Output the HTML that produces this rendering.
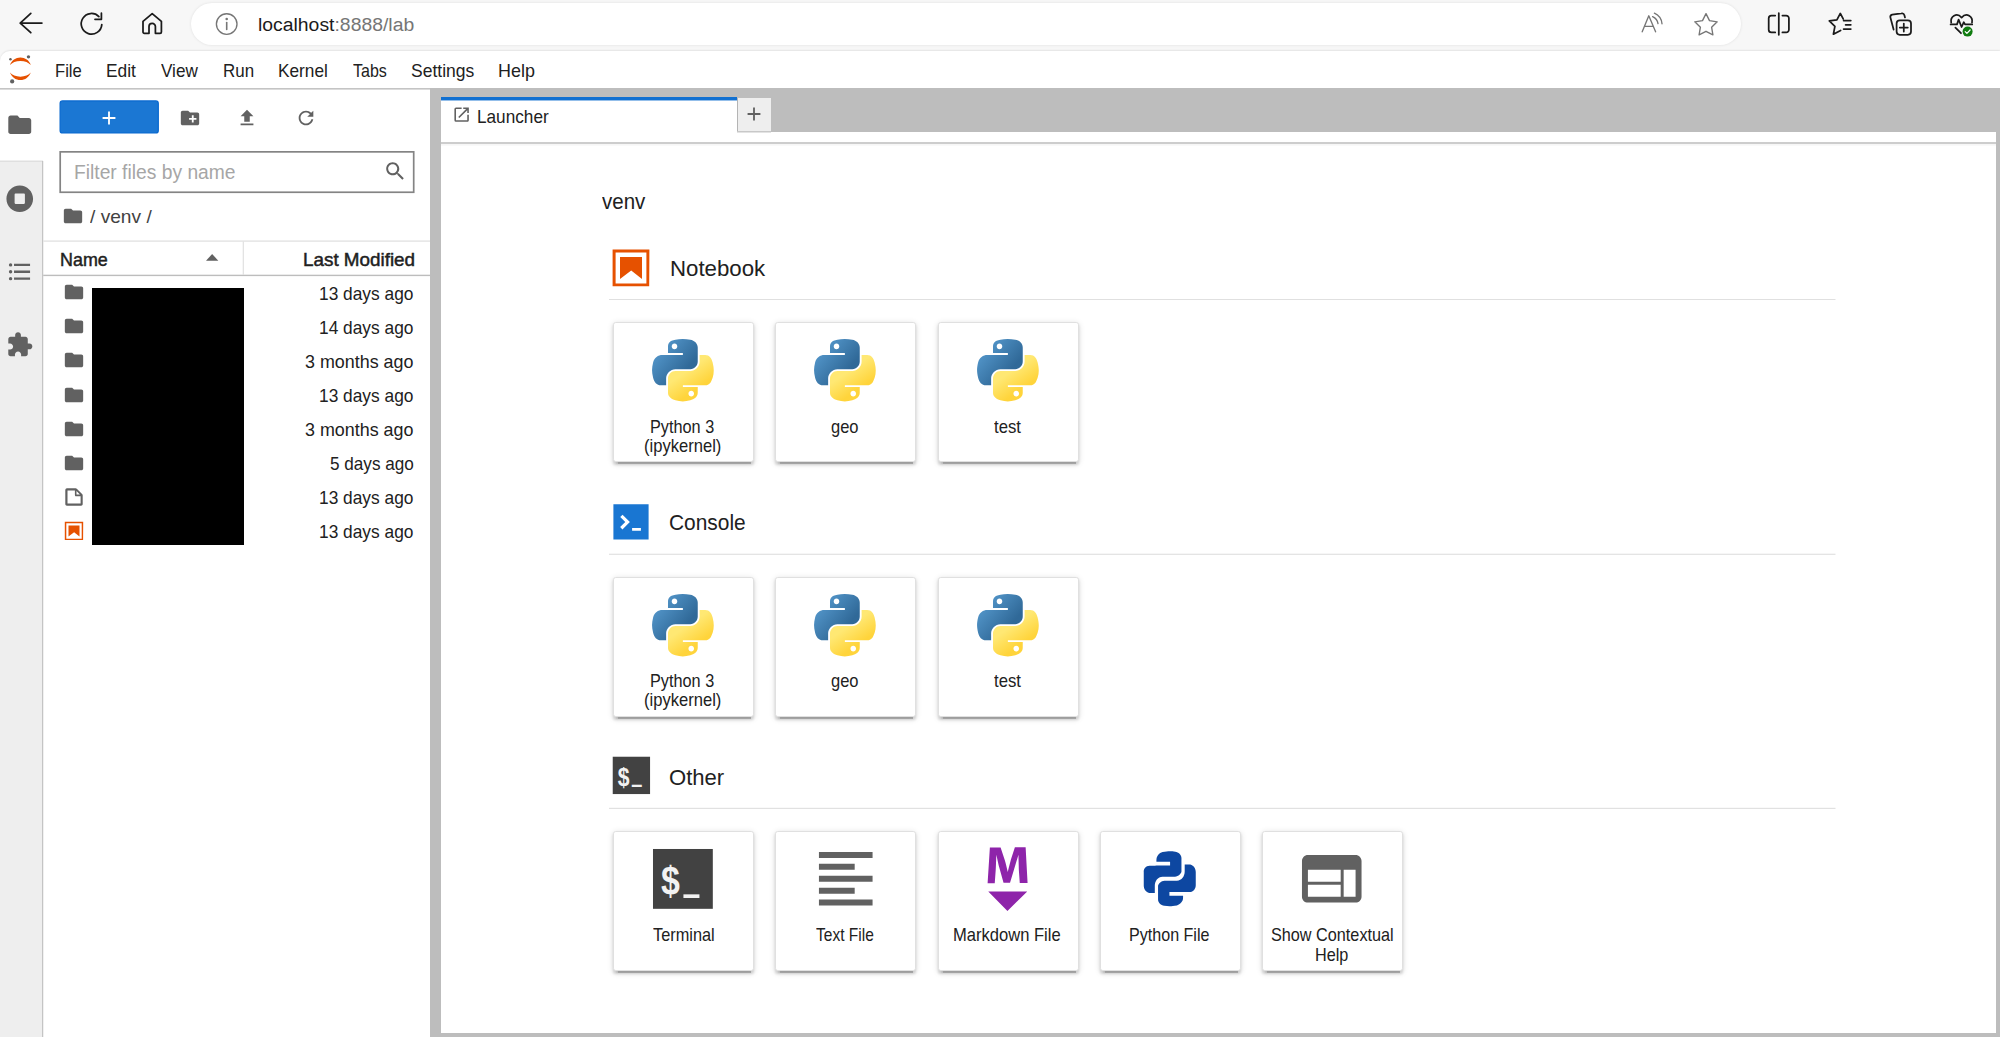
<!DOCTYPE html>
<html lang="en"><head><meta charset="utf-8"><title>JupyterLab</title>
<style>
*{box-sizing:border-box;margin:0;padding:0}
html,body{width:2000px;height:1037px;overflow:hidden;background:#f7f7f7;font-family:"Liberation Sans", sans-serif;}
.a{position:absolute}
.t{position:absolute;white-space:nowrap;line-height:1;transform-origin:0 0;display:block}
.i{position:absolute;display:block;overflow:visible}
#chrome{left:0;top:0;width:2000px;height:50px;background:#f7f7f7}
#omni{left:191px;top:3px;width:1550px;height:42px;border-radius:21px;background:#fff;box-shadow:0 0 3px rgba(0,0,0,.10)}
#page{left:0;top:51px;width:2000px;height:986px;background:#fff;border-top-left-radius:10px;box-shadow:0 -1px 1.6px rgba(0,0,0,.075)}

#side{left:0;top:161px;width:42px;height:876px;background:#eeeeee}





#redact{left:92px;top:288px;width:152px;height:257px;background:#000}
#split{left:430px;top:88px;width:11px;height:949px;background:#bdbdbd}
#dock{left:441px;top:88px;width:1559px;height:44px;background:#bdbdbd}
#rightb{left:1996px;top:131px;width:4px;height:906px;background:#bdbdbd}
#botb{left:430px;top:1033px;width:1570px;height:4px;background:#bdbdbd}
#tab{left:441px;top:97px;width:296px;height:36px;background:#fff}
#addtab{left:737px;top:98px;width:34px;height:33px;background:#eeeeee}


.card{position:absolute;width:141px;height:140.1px;background:#fff;border:1px solid #e0e0e0;border-radius:2.75px;
 box-shadow:0 4.8px 1.6px -2.75px rgba(0,0,0,.22),0 2.75px 2.75px 0 rgba(0,0,0,.14),0 1.4px 6.9px 0 rgba(0,0,0,.12)}
</style></head><body>
<header id="browser-toolbar" aria-label="Browser toolbar">
<div id="chrome" class="a"><div id="omni" class="a"></div></div>

<svg class="i" style="left:0;top:0" width="2000" height="50" viewBox="0 0 2000 50" fill="none" stroke-linecap="round" stroke-linejoin="round">
 <g stroke="#1b1b1b" stroke-width="1.75">
  <path d="M41.9 23.1H20.4M30.8 13.4L20.2 23.1L30.8 32.7"/>
  <path d="M101.8 24.6A10.3 10.3 0 1 1 98.9 16.6"/><path d="M101.4 13.2V19.3H95"/>
  <path d="M152.2 13.7L143 21.4V32a1.3 1.3 0 0 0 1.3 1.3H149V26.6a3.2 3.2 0 0 1 6.4 0V33.3H160.1a1.3 1.3 0 0 0 1.3 -1.3V21.4Z"/>
  <path d="M1775.2 15.6H1771.4a2.7 2.7 0 0 0 -2.7 2.7V29.7a2.7 2.7 0 0 0 2.7 2.7H1775.2M1782.4 15.6H1786.2a2.7 2.7 0 0 1 2.7 2.7V29.7a2.7 2.7 0 0 1 -2.7 2.7H1782.4M1778.8 13.2V34.8"/>
  <path d="M1840.6 30.4L1833.4 34.2L1834.9 26.3L1829.3 20.9L1836.9 19.8L1840.3 13.4L1843.2 18.9M1843.6 20.6H1850.8M1845.6 24.8H1850.8M1843.6 29H1850.8"/>
  <path d="M1893.6 29.6L1890.4 17.6a2.5 2.5 0 0 1 1.8 -3L1901.4 13.4a2.5 2.5 0 0 1 3 1.8L1905 17.4"/>
  <rect x="1896.6" y="20.4" width="14.4" height="14.4" rx="3.2"/><path d="M1903.8 23.6V31.6M1899.8 27.6H1907.8"/>
  <path d="M1951.2 22.6C1950 17 1956.5 11.8 1961.6 17.6C1966.7 11.8 1973.2 17 1972 22.6"/>
  <path d="M1950.6 24.4H1957L1958.6 19.6L1961.6 27L1963.8 22.2L1965 24.4H1972.2"/><path d="M1955.4 27.6L1961 33.2"/>
 </g>
 <g stroke="#767676" stroke-width="1.35">
  <circle cx="226.7" cy="24" r="10.3"/><path d="M226.7 22.6V29.4" stroke-width="1.6"/><circle cx="226.7" cy="19" r="0.6" fill="#767676"/>
  <path d="M1642.2 31.8L1648.8 15.8L1655.6 31.8M1644.6 26.4H1653.2M1652.6 16.6C1655.6 18 1657.6 20.6 1658 23.6M1654.4 13.2C1658.8 15.2 1661.6 19 1662 23.8"/>
  <path d="M1706 13.6L1709.5 20.6L1717.2 21.8L1711.6 27.2L1712.9 34.9L1706 31.3L1699.1 34.9L1700.4 27.2L1694.8 21.8L1702.5 20.6Z"/>
 </g>
 <circle cx="1967.6" cy="31.6" r="5" fill="#107c10"/><path d="M1965.2 31.7L1966.9 33.4L1970.1 30" stroke="#fff" stroke-width="1.2"/>
</svg>
<span class="t" style="left:258.19px;top:15.00px;font-size:19.2px;color:#1b1b1b;transform:scaleX(1.0097);">localhost<span style="color:#767676">:8888/lab</span></span>
</header>
<div id="page" class="a"></div>
<nav id="menubar" aria-label="Main menu">
<svg class="i" style="left:0;top:0" width="2000" height="1037" viewBox="0 0 2000 1037" aria-hidden="true"><rect x="0" y="88" width="431" height="1.6" fill="#c4c4c4"/></svg>
<svg class="i" style="left:9.20px;top:55.20px" width="22.2" height="29" viewBox="0 0 39 51" ><g transform="translate(-1638 -2281)"><g fill="#E65100"><path transform="translate(1639.74 2311.98)" d="M 18.2646 7.13411C 10.4145 7.13411 3.55872 4.2576 0 0C 1.32539 3.8204 3.79556 7.13081 7.0686 9.47303C 10.3417 11.8152 14.2557 13.0734 18.269 13.0734C 22.2823 13.0734 26.1963 11.8152 29.4694 9.47303C 32.7424 7.13081 35.2126 3.8204 36.538 0C 32.9705 4.2576 26.1148 7.13411 18.2646 7.13411Z"/><path transform="translate(1639.73 2285.48)" d="M 18.2733 5.93931C 26.1235 5.93931 32.9793 8.81583 36.538 13.0734C 35.2126 9.25303 32.7424 5.94262 29.4694 3.6004C 26.1963 1.25818 22.2823 0 18.269 0C 14.2557 0 10.3417 1.25818 7.0686 3.6004C 3.79556 5.94262 1.32539 9.25303 0 13.0734C 3.56745 8.82463 10.4232 5.93931 18.2733 5.93931Z"/></g><g fill="#616161"><circle cx="1672.25" cy="2284.27" r="2.95"/><circle cx="1643.52" cy="2327.54" r="3.72"/><circle cx="1640.54" cy="2288.26" r="2.2"/></g></g></svg>
<span class="t" style="left:55.06px;top:63.00px;font-size:17.7px;color:#212121;transform:scaleX(0.9399);">File</span>
<span class="t" style="left:106.02px;top:63.00px;font-size:17.7px;color:#212121;transform:scaleX(0.9809);">Edit</span>
<span class="t" style="left:161.00px;top:63.00px;font-size:17.7px;color:#212121;transform:scaleX(0.9675);">View</span>
<span class="t" style="left:222.74px;top:63.00px;font-size:17.7px;color:#212121;transform:scaleX(0.9572);">Run</span>
<span class="t" style="left:278.02px;top:63.00px;font-size:17.7px;color:#212121;transform:scaleX(0.9756);">Kernel</span>
<span class="t" style="left:352.50px;top:63.00px;font-size:17.7px;color:#212121;transform:scaleX(0.9063);">Tabs</span>
<span class="t" style="left:411.00px;top:63.00px;font-size:17.7px;color:#212121;transform:scaleX(0.9896);">Settings</span>
<span class="t" style="left:498.49px;top:63.00px;font-size:17.7px;color:#212121;transform:scaleX(1.0129);">Help</span>
</nav>
<aside id="sidebar" aria-label="Sidebar">
<div id="side" class="a"></div>
<svg class="i" style="left:0;top:0" width="2000" height="1037" viewBox="0 0 2000 1037" aria-hidden="true"><rect x="0" y="160.6" width="43" height="1" fill="#d6d6d6"/><rect x="42.05" y="161" width="1.2" height="876" fill="#c2c2c2"/></svg>
<svg class="i" style="left:6.25px;top:110.85px" width="27.5" height="27.5" viewBox="0 0 24 24" ><path d="M10 4H4c-1.1 0-1.99.9-1.99 2L2 18c0 1.1.9 2 2 2h16c1.1 0 2-.9 2-2V8c0-1.1-.9-2-2-2h-8l-2-2z" fill="#616161"/></svg>
<svg class="i" style="left:6.25px;top:185.25px" width="27.5" height="27.5" viewBox="0 0 512 512" ><path d="M256 8C119 8 8 119 8 256s111 248 248 248 248-111 248-248S393 8 256 8zm96 328c0 8.8-7.2 16-16 16H176c-8.8 0-16-7.2-16-16V176c0-8.8 7.2-16 16-16h160c8.8 0 16 7.2 16 16v160z" fill="#616161"/></svg>
<svg class="i" style="left:6.20px;top:257.95px" width="27.5" height="27.5" viewBox="0 0 24 24" ><path d="M7,5H21V7H7V5M7,13V11H21V13H7M4,4.5A1.5,1.5 0 0,1 5.5,6A1.5,1.5 0 0,1 4,7.5A1.5,1.5 0 0,1 2.5,6A1.5,1.5 0 0,1 4,4.5M4,10.5A1.5,1.5 0 0,1 5.5,12A1.5,1.5 0 0,1 4,13.5A1.5,1.5 0 0,1 2.5,12A1.5,1.5 0 0,1 4,10.5M7,19V17H21V19H7M4,16.5A1.5,1.5 0 0,1 5.5,18A1.5,1.5 0 0,1 4,19.5A1.5,1.5 0 0,1 2.5,18A1.5,1.5 0 0,1 4,16.5Z" fill="#616161"/></svg>
<svg class="i" style="left:5.90px;top:330.55px" width="27.5" height="27.5" viewBox="0 0 24 24" ><path d="M20.5 11H19V7c0-1.1-.9-2-2-2h-4V3.5C13 2.12 11.88 1 10.5 1S8 2.12 8 3.5V5H4c-1.1 0-1.99.9-1.99 2v3.8H3.5c1.49 0 2.7 1.21 2.7 2.7s-1.21 2.7-2.7 2.7H2V20c0 1.1.9 2 2 2h3.8v-1.5c0-1.49 1.21-2.7 2.7-2.7 1.49 0 2.7 1.21 2.7 2.7V22H17c1.1 0 2-.9 2-2v-4h1.5c1.38 0 2.5-1.12 2.5-2.5S21.88 11 20.5 11z" fill="#616161"/></svg>
</aside>
<section id="filebrowser" aria-label="File browser">
<svg class="i" style="left:0;top:0" width="2000" height="1037" viewBox="0 0 2000 1037" aria-hidden="true"><rect x="60.1" y="100.9" width="98.2" height="32.1" rx="2.6" fill="#1b77d3" stroke="#0868cf" stroke-width="1.2"/><rect x="60.2" y="151.85" width="353.5" height="40.4" fill="#fff" stroke="#848484" stroke-width="1.7"/><rect x="43.2" y="240.4" width="387" height="1.4" fill="#e3e3e3"/><rect x="43.2" y="274.7" width="387" height="1.4" fill="#bdbdbd"/><rect x="242.7" y="241.5" width="1.2" height="33.5" fill="#e0e0e0"/></svg>
<div id="redact" class="a"></div>
<svg class="i" style="left:98.20px;top:106.90px" width="22" height="22" viewBox="0 0 24 24" ><path d="M19 13h-6v6h-2v-6H5v-2h6V5h2v6h6v2z" fill="#fff"/></svg>
<svg class="i" style="left:178.60px;top:106.90px" width="22" height="22" viewBox="0 0 24 24" ><path d="M20 6h-8l-2-2H4c-1.11 0-1.99.89-1.99 2L2 18c0 1.11.89 2 2 2h16c1.11 0 2-.89 2-2V8c0-1.11-.89-2-2-2zm-1 8h-3v3h-2v-3h-3v-2h3V9h2v3h3v2z" fill="#616161"/></svg>
<svg class="i" style="left:236.20px;top:107.05px" width="22" height="22" viewBox="0 0 24 24" ><path d="M9 16h6v-6h4l-7-7-7 7h4zm-4 2h14v2H5z" fill="#616161"/></svg>
<svg class="i" style="left:294.85px;top:106.85px" width="22" height="22" viewBox="0 0 18 18" ><path d="M9 13.5c-2.49 0-4.5-2.01-4.5-4.5S6.51 4.5 9 4.5c1.24 0 2.36.52 3.17 1.33L10 8h5V3l-1.76 1.76C12.15 3.68 10.66 3 9 3 5.69 3 3.01 5.69 3.01 9S5.69 15 9 15c2.97 0 5.43-2.16 5.9-5h-1.52c-.46 2-2.24 3.5-4.38 3.5z" fill="#616161"/></svg>
<svg class="i" style="left:383.80px;top:160.10px" width="22" height="22" viewBox="0 0 18 18" ><path d="M12.1,10.9h-0.7l-0.2-0.2c0.8-0.9,1.3-2.2,1.3-3.5c0-3-2.4-5.4-5.4-5.4S1.8,4.2,1.8,7.1s2.4,5.4,5.4,5.4 c1.3,0,2.5-0.5,3.5-1.3l0.2,0.2v0.7l4.1,4.1l1.2-1.2L12.1,10.9z M7.1,10.9c-2.1,0-3.7-1.7-3.7-3.7s1.7-3.7,3.7-3.7s3.7,1.7,3.7,3.7 S9.2,10.9,7.1,10.9z" fill="#616161"/></svg>
<svg class="i" style="left:62.17px;top:205.20px" width="22" height="22" viewBox="0 0 24 24" ><path d="M10 4H4c-1.1 0-1.99.9-1.99 2L2 18c0 1.1.9 2 2 2h16c1.1 0 2-.9 2-2V8c0-1.1-.9-2-2-2h-8l-2-2z" fill="#616161"/></svg>
<svg class="i" style="left:204px;top:252px" width="16" height="10" viewBox="204 252 16 10"><path d="M206 260.8L212.15 254L218.3 260.8Z" fill="#616161"/></svg>
<svg class="i" style="left:62.97px;top:281.10px" width="22" height="22" viewBox="0 0 24 24" ><path d="M10 4H4c-1.1 0-1.99.9-1.99 2L2 18c0 1.1.9 2 2 2h16c1.1 0 2-.9 2-2V8c0-1.1-.9-2-2-2h-8l-2-2z" fill="#616161"/></svg>
<svg class="i" style="left:62.97px;top:315.25px" width="22" height="22" viewBox="0 0 24 24" ><path d="M10 4H4c-1.1 0-1.99.9-1.99 2L2 18c0 1.1.9 2 2 2h16c1.1 0 2-.9 2-2V8c0-1.1-.9-2-2-2h-8l-2-2z" fill="#616161"/></svg>
<svg class="i" style="left:62.97px;top:349.40px" width="22" height="22" viewBox="0 0 24 24" ><path d="M10 4H4c-1.1 0-1.99.9-1.99 2L2 18c0 1.1.9 2 2 2h16c1.1 0 2-.9 2-2V8c0-1.1-.9-2-2-2h-8l-2-2z" fill="#616161"/></svg>
<svg class="i" style="left:62.97px;top:383.55px" width="22" height="22" viewBox="0 0 24 24" ><path d="M10 4H4c-1.1 0-1.99.9-1.99 2L2 18c0 1.1.9 2 2 2h16c1.1 0 2-.9 2-2V8c0-1.1-.9-2-2-2h-8l-2-2z" fill="#616161"/></svg>
<svg class="i" style="left:62.97px;top:417.70px" width="22" height="22" viewBox="0 0 24 24" ><path d="M10 4H4c-1.1 0-1.99.9-1.99 2L2 18c0 1.1.9 2 2 2h16c1.1 0 2-.9 2-2V8c0-1.1-.9-2-2-2h-8l-2-2z" fill="#616161"/></svg>
<svg class="i" style="left:62.97px;top:451.85px" width="22" height="22" viewBox="0 0 24 24" ><path d="M10 4H4c-1.1 0-1.99.9-1.99 2L2 18c0 1.1.9 2 2 2h16c1.1 0 2-.9 2-2V8c0-1.1-.9-2-2-2h-8l-2-2z" fill="#616161"/></svg>
<svg class="i" style="left:62.80px;top:485.70px" width="22" height="22" viewBox="0 0 22 22" ><path d="M19.3 8.2l-5.5-5.5c-.3-.3-.7-.5-1.2-.5H3.9c-.8.1-1.6.9-1.6 1.8v14.1c0 .9.7 1.6 1.6 1.6h14.2c.9 0 1.6-.7 1.6-1.6V9.4c.1-.5-.1-.9-.4-1.2zm-5.8-3.3l3.4 3.6h-3.4V4.9zm3.9 12.7H4.7c-.1 0-.2 0-.2-.2V4.7c0-.2.1-.3.2-.3h7.2v4.4s0 .8.3 1.1c.3.3 1.1.3 1.1.3h4.3v7.2s-.1.2-.2.2z" fill="#616161"/></svg>
<svg class="i" style="left:62.80px;top:519.60px" width="22" height="22" viewBox="0 0 22 22" ><g fill="#E65100"><path d="M18.7 3.3v15.4H3.3V3.3h15.4m1.5-1.5H1.8v18.3h18.3l.1-18.3z"/><path d="M16.5 16.5l-5.4-4.3-5.6 4.3v-11h11z"/></g></svg>
<span class="t" style="left:74.02px;top:163.00px;font-size:19.7px;color:#a6a6a6;transform:scaleX(0.9777);">Filter files by name</span>
<span class="t" style="left:90.00px;top:209.00px;font-size:17.7px;color:#424242;transform:scaleX(1.0822);">/ venv /</span>
<span class="t" style="left:59.79px;top:252.00px;font-size:17.7px;color:#212121;transform:scaleX(1.0120);-webkit-text-stroke:0.45px #212121;">Name</span>
<span class="t" style="left:302.83px;top:252.00px;font-size:17.7px;color:#212121;transform:scaleX(1.0652);-webkit-text-stroke:0.45px #212121;">Last Modified</span>
<span class="t" style="left:319.42px;top:286.00px;font-size:17.7px;color:#212121;transform:scaleX(0.9797);">13 days ago</span>
<span class="t" style="left:319.42px;top:320.00px;font-size:17.7px;color:#212121;transform:scaleX(0.9797);">14 days ago</span>
<span class="t" style="left:305.40px;top:354.00px;font-size:17.7px;color:#212121;transform:scaleX(1.0117);">3 months ago</span>
<span class="t" style="left:319.42px;top:388.00px;font-size:17.7px;color:#212121;transform:scaleX(0.9797);">13 days ago</span>
<span class="t" style="left:305.40px;top:422.00px;font-size:17.7px;color:#212121;transform:scaleX(1.0117);">3 months ago</span>
<span class="t" style="left:330.00px;top:456.00px;font-size:17.7px;color:#212121;transform:scaleX(0.9689);">5 days ago</span>
<span class="t" style="left:319.42px;top:490.00px;font-size:17.7px;color:#212121;transform:scaleX(0.9797);">13 days ago</span>
<span class="t" style="left:319.42px;top:524.00px;font-size:17.7px;color:#212121;transform:scaleX(0.9797);">13 days ago</span>
</section>
<main id="launcher" aria-label="Launcher">
<div id="split" class="a"></div><div id="dock" class="a"></div><div id="rightb" class="a"></div><div id="botb" class="a"></div>
<div id="tab" class="a"></div><div id="addtab" class="a"></div>
<svg class="i" style="left:0;top:0" width="2000" height="1037" viewBox="0 0 2000 1037" aria-hidden="true"><rect x="441" y="97" width="296" height="3.45" fill="#1170d1"/><rect x="737" y="98" width="1" height="33.5" fill="#b4b4b4"/><rect x="737" y="131" width="34" height="1.5" fill="#c8c8c8"/><rect x="441" y="142" width="1555" height="2.1" fill="#cdcdcd"/><rect x="441" y="144.1" width="1555" height="1.5" fill="#f6f6f6"/><rect x="609" y="299" width="1226.5" height="1" fill="#e0e0e0"/><rect x="609" y="553.7" width="1226.5" height="1.15" fill="#e0e0e0"/><rect x="609" y="807.8" width="1226.5" height="1.15" fill="#e0e0e0"/></svg>
<div class="card" style="left:613.00px;top:322.0px"></div>
<div class="card" style="left:775.25px;top:322.0px"></div>
<div class="card" style="left:937.50px;top:322.0px"></div>
<div class="card" style="left:613.00px;top:576.9px"></div>
<div class="card" style="left:775.25px;top:576.9px"></div>
<div class="card" style="left:937.50px;top:576.9px"></div>
<div class="card" style="left:613.00px;top:830.8px"></div>
<div class="card" style="left:775.25px;top:830.8px"></div>
<div class="card" style="left:937.50px;top:830.8px"></div>
<div class="card" style="left:1099.75px;top:830.8px"></div>
<div class="card" style="left:1262.00px;top:830.8px"></div>
<svg class="i" style="left:452.10px;top:105.10px" width="19.25" height="19.25" viewBox="0 0 24 24" ><path d="M19 19H5V5h7V3H5a2 2 0 00-2 2v14a2 2 0 002 2h14c1.1 0 2-.9 2-2v-7h-2v7zM14 3v2h3.59l-9.83 9.83 1.41 1.41L19 6.41V10h2V3h-7z" fill="#616161"/></svg>
<svg class="i" style="left:743.20px;top:103.20px" width="22" height="22" viewBox="0 0 24 24" ><path d="M19 13h-6v6h-2v-6H5v-2h6V5h2v6h6v2z" fill="#616161"/></svg>
<svg class="i" style="left:608.70px;top:245.80px" width="44" height="44" viewBox="0 0 22 22" ><g fill="#E65100"><path d="M18.7 3.3v15.4H3.3V3.3h15.4m1.5-1.5H1.8v18.3h18.3l.1-18.3z"/><path d="M16.5 16.5l-5.4-4.3-5.6 4.3v-11h11z"/></g></svg>
<svg class="i" style="left:608.90px;top:499.85px" width="44" height="44" viewBox="0 0 200 200" ><path d="M20 19.8h160v159.9H20z" fill="#1976d2"/><path d="M105 127.3h40v12.8h-40zM51.1 77L74 99.9l-23.3 23.3 10.5 10.5 23.3-23.3L95 99.9 84.5 89.4 61.6 66.5z" fill="#fff"/></svg>
<svg class="i" style="left:608.55px;top:753.25px" width="44.8" height="44.8" viewBox="0 0 24 24" ><rect x="2" y="2" width="20" height="20" fill="#424242"/><text transform="translate(4.667 17.527) scale(0.11333 0.13902)" font-family="Liberation Sans, sans-serif" font-size="100" font-weight="bold" fill="#f2f2f2">$</text><text transform="translate(12.293 14.500) scale(0.09259 0.31750)" font-family="Liberation Sans, sans-serif" font-size="100" font-weight="bold" fill="#f2f2f2">_</text></svg>
<svg class="i" style="left:652.15px;top:338.70px" width="61.8" height="62.5" viewBox="-0.1 -0.1 111.3 112.6" preserveAspectRatio="none"><defs><linearGradient id="pb1" gradientUnits="userSpaceOnUse" x1="5" y1="5" x2="62" y2="54"><stop offset="0" stop-color="#5A9FD4"/><stop offset="1" stop-color="#306998"/></linearGradient><linearGradient id="py1" gradientUnits="userSpaceOnUse" x1="83" y1="88" x2="62" y2="58"><stop offset="0" stop-color="#FFD43B"/><stop offset="1" stop-color="#FFE873"/></linearGradient></defs><path d="M 54.918785,9.1927421e-4 C 50.335132,0.02221727 45.957846,0.41313697 42.106285,1.0946693 30.760069,3.0991731 28.700036,7.2947714 28.700035,15.032169 v 10.21875 h 26.8125 v 3.40625 h -26.8125 -10.0625 c -7.792459,0 -14.6157588,4.683717 -16.7499998,13.59375 -2.46181998,10.212966 -2.57101508,16.586023 0,27.25 1.9059283,7.937852 6.4575432,13.593748 14.2499998,13.59375 h 9.21875 v -12.25 c 0,-8.849902 7.657144,-16.656248 16.75,-16.65625 h 26.78125 c 7.454951,0 13.406253,-6.138164 13.40625,-13.625 v -25.53125 c 0,-7.2663386 -6.12998,-12.7247771 -13.40625,-13.9374997 C 64.281548,0.32794397 59.502438,-0.02037903 54.918785,9.1927421e-4 Z m -14.5,8.21875012579 c 2.769547,0 5.03125,2.2986456 5.03125,5.1249996 -2e-6,2.816336 -2.261703,5.09375 -5.03125,5.09375 -2.779476,-1e-6 -5.03125,-2.277415 -5.03125,-5.09375 -10e-7,-2.826353 2.251774,-5.1249996 5.03125,-5.1249996 z" fill="url(#pb1)"/><path d="m 85.637535,28.657169 v 11.90625 c 0,9.230755 -7.825895,16.999999 -16.75,17 h -26.78125 c -7.335833,0 -13.406249,6.278483 -13.40625,13.625 v 25.531247 c 0,7.266344 6.318588,11.540324 13.40625,13.625004 8.487331,2.49561 16.626237,2.94663 26.78125,0 6.750155,-1.95439 13.406253,-5.88761 13.40625,-13.625004 V 86.500919 h -26.78125 v -3.40625 h 26.78125 13.406254 c 7.792461,0 10.696251,-5.435408 13.406241,-13.59375 2.79933,-8.398886 2.68022,-16.475776 0,-27.25 -1.92578,-7.757441 -5.60387,-13.59375 -13.406241,-13.59375 z m -15.0625,64.65625 c 2.779478,3e-6 5.03125,2.277417 5.03125,5.093747 -2e-6,2.826354 -2.251775,5.125004 -5.03125,5.125004 -2.76955,0 -5.03125,-2.29865 -5.03125,-5.125004 2e-6,-2.81633 2.261697,-5.093747 5.03125,-5.093747 z" fill="url(#py1)"/></svg>
<svg class="i" style="left:814.40px;top:338.70px" width="61.8" height="62.5" viewBox="-0.1 -0.1 111.3 112.6" preserveAspectRatio="none"><defs><linearGradient id="pb2" gradientUnits="userSpaceOnUse" x1="5" y1="5" x2="62" y2="54"><stop offset="0" stop-color="#5A9FD4"/><stop offset="1" stop-color="#306998"/></linearGradient><linearGradient id="py2" gradientUnits="userSpaceOnUse" x1="83" y1="88" x2="62" y2="58"><stop offset="0" stop-color="#FFD43B"/><stop offset="1" stop-color="#FFE873"/></linearGradient></defs><path d="M 54.918785,9.1927421e-4 C 50.335132,0.02221727 45.957846,0.41313697 42.106285,1.0946693 30.760069,3.0991731 28.700036,7.2947714 28.700035,15.032169 v 10.21875 h 26.8125 v 3.40625 h -26.8125 -10.0625 c -7.792459,0 -14.6157588,4.683717 -16.7499998,13.59375 -2.46181998,10.212966 -2.57101508,16.586023 0,27.25 1.9059283,7.937852 6.4575432,13.593748 14.2499998,13.59375 h 9.21875 v -12.25 c 0,-8.849902 7.657144,-16.656248 16.75,-16.65625 h 26.78125 c 7.454951,0 13.406253,-6.138164 13.40625,-13.625 v -25.53125 c 0,-7.2663386 -6.12998,-12.7247771 -13.40625,-13.9374997 C 64.281548,0.32794397 59.502438,-0.02037903 54.918785,9.1927421e-4 Z m -14.5,8.21875012579 c 2.769547,0 5.03125,2.2986456 5.03125,5.1249996 -2e-6,2.816336 -2.261703,5.09375 -5.03125,5.09375 -2.779476,-1e-6 -5.03125,-2.277415 -5.03125,-5.09375 -10e-7,-2.826353 2.251774,-5.1249996 5.03125,-5.1249996 z" fill="url(#pb2)"/><path d="m 85.637535,28.657169 v 11.90625 c 0,9.230755 -7.825895,16.999999 -16.75,17 h -26.78125 c -7.335833,0 -13.406249,6.278483 -13.40625,13.625 v 25.531247 c 0,7.266344 6.318588,11.540324 13.40625,13.625004 8.487331,2.49561 16.626237,2.94663 26.78125,0 6.750155,-1.95439 13.406253,-5.88761 13.40625,-13.625004 V 86.500919 h -26.78125 v -3.40625 h 26.78125 13.406254 c 7.792461,0 10.696251,-5.435408 13.406241,-13.59375 2.79933,-8.398886 2.68022,-16.475776 0,-27.25 -1.92578,-7.757441 -5.60387,-13.59375 -13.406241,-13.59375 z m -15.0625,64.65625 c 2.779478,3e-6 5.03125,2.277417 5.03125,5.093747 -2e-6,2.826354 -2.251775,5.125004 -5.03125,5.125004 -2.76955,0 -5.03125,-2.29865 -5.03125,-5.125004 2e-6,-2.81633 2.261697,-5.093747 5.03125,-5.093747 z" fill="url(#py2)"/></svg>
<svg class="i" style="left:976.65px;top:338.70px" width="61.8" height="62.5" viewBox="-0.1 -0.1 111.3 112.6" preserveAspectRatio="none"><defs><linearGradient id="pb3" gradientUnits="userSpaceOnUse" x1="5" y1="5" x2="62" y2="54"><stop offset="0" stop-color="#5A9FD4"/><stop offset="1" stop-color="#306998"/></linearGradient><linearGradient id="py3" gradientUnits="userSpaceOnUse" x1="83" y1="88" x2="62" y2="58"><stop offset="0" stop-color="#FFD43B"/><stop offset="1" stop-color="#FFE873"/></linearGradient></defs><path d="M 54.918785,9.1927421e-4 C 50.335132,0.02221727 45.957846,0.41313697 42.106285,1.0946693 30.760069,3.0991731 28.700036,7.2947714 28.700035,15.032169 v 10.21875 h 26.8125 v 3.40625 h -26.8125 -10.0625 c -7.792459,0 -14.6157588,4.683717 -16.7499998,13.59375 -2.46181998,10.212966 -2.57101508,16.586023 0,27.25 1.9059283,7.937852 6.4575432,13.593748 14.2499998,13.59375 h 9.21875 v -12.25 c 0,-8.849902 7.657144,-16.656248 16.75,-16.65625 h 26.78125 c 7.454951,0 13.406253,-6.138164 13.40625,-13.625 v -25.53125 c 0,-7.2663386 -6.12998,-12.7247771 -13.40625,-13.9374997 C 64.281548,0.32794397 59.502438,-0.02037903 54.918785,9.1927421e-4 Z m -14.5,8.21875012579 c 2.769547,0 5.03125,2.2986456 5.03125,5.1249996 -2e-6,2.816336 -2.261703,5.09375 -5.03125,5.09375 -2.779476,-1e-6 -5.03125,-2.277415 -5.03125,-5.09375 -10e-7,-2.826353 2.251774,-5.1249996 5.03125,-5.1249996 z" fill="url(#pb3)"/><path d="m 85.637535,28.657169 v 11.90625 c 0,9.230755 -7.825895,16.999999 -16.75,17 h -26.78125 c -7.335833,0 -13.406249,6.278483 -13.40625,13.625 v 25.531247 c 0,7.266344 6.318588,11.540324 13.40625,13.625004 8.487331,2.49561 16.626237,2.94663 26.78125,0 6.750155,-1.95439 13.406253,-5.88761 13.40625,-13.625004 V 86.500919 h -26.78125 v -3.40625 h 26.78125 13.406254 c 7.792461,0 10.696251,-5.435408 13.406241,-13.59375 2.79933,-8.398886 2.68022,-16.475776 0,-27.25 -1.92578,-7.757441 -5.60387,-13.59375 -13.406241,-13.59375 z m -15.0625,64.65625 c 2.779478,3e-6 5.03125,2.277417 5.03125,5.093747 -2e-6,2.826354 -2.251775,5.125004 -5.03125,5.125004 -2.76955,0 -5.03125,-2.29865 -5.03125,-5.125004 2e-6,-2.81633 2.261697,-5.093747 5.03125,-5.093747 z" fill="url(#py3)"/></svg>
<svg class="i" style="left:652.15px;top:593.50px" width="61.8" height="62.5" viewBox="-0.1 -0.1 111.3 112.6" preserveAspectRatio="none"><defs><linearGradient id="pb4" gradientUnits="userSpaceOnUse" x1="5" y1="5" x2="62" y2="54"><stop offset="0" stop-color="#5A9FD4"/><stop offset="1" stop-color="#306998"/></linearGradient><linearGradient id="py4" gradientUnits="userSpaceOnUse" x1="83" y1="88" x2="62" y2="58"><stop offset="0" stop-color="#FFD43B"/><stop offset="1" stop-color="#FFE873"/></linearGradient></defs><path d="M 54.918785,9.1927421e-4 C 50.335132,0.02221727 45.957846,0.41313697 42.106285,1.0946693 30.760069,3.0991731 28.700036,7.2947714 28.700035,15.032169 v 10.21875 h 26.8125 v 3.40625 h -26.8125 -10.0625 c -7.792459,0 -14.6157588,4.683717 -16.7499998,13.59375 -2.46181998,10.212966 -2.57101508,16.586023 0,27.25 1.9059283,7.937852 6.4575432,13.593748 14.2499998,13.59375 h 9.21875 v -12.25 c 0,-8.849902 7.657144,-16.656248 16.75,-16.65625 h 26.78125 c 7.454951,0 13.406253,-6.138164 13.40625,-13.625 v -25.53125 c 0,-7.2663386 -6.12998,-12.7247771 -13.40625,-13.9374997 C 64.281548,0.32794397 59.502438,-0.02037903 54.918785,9.1927421e-4 Z m -14.5,8.21875012579 c 2.769547,0 5.03125,2.2986456 5.03125,5.1249996 -2e-6,2.816336 -2.261703,5.09375 -5.03125,5.09375 -2.779476,-1e-6 -5.03125,-2.277415 -5.03125,-5.09375 -10e-7,-2.826353 2.251774,-5.1249996 5.03125,-5.1249996 z" fill="url(#pb4)"/><path d="m 85.637535,28.657169 v 11.90625 c 0,9.230755 -7.825895,16.999999 -16.75,17 h -26.78125 c -7.335833,0 -13.406249,6.278483 -13.40625,13.625 v 25.531247 c 0,7.266344 6.318588,11.540324 13.40625,13.625004 8.487331,2.49561 16.626237,2.94663 26.78125,0 6.750155,-1.95439 13.406253,-5.88761 13.40625,-13.625004 V 86.500919 h -26.78125 v -3.40625 h 26.78125 13.406254 c 7.792461,0 10.696251,-5.435408 13.406241,-13.59375 2.79933,-8.398886 2.68022,-16.475776 0,-27.25 -1.92578,-7.757441 -5.60387,-13.59375 -13.406241,-13.59375 z m -15.0625,64.65625 c 2.779478,3e-6 5.03125,2.277417 5.03125,5.093747 -2e-6,2.826354 -2.251775,5.125004 -5.03125,5.125004 -2.76955,0 -5.03125,-2.29865 -5.03125,-5.125004 2e-6,-2.81633 2.261697,-5.093747 5.03125,-5.093747 z" fill="url(#py4)"/></svg>
<svg class="i" style="left:814.40px;top:593.50px" width="61.8" height="62.5" viewBox="-0.1 -0.1 111.3 112.6" preserveAspectRatio="none"><defs><linearGradient id="pb5" gradientUnits="userSpaceOnUse" x1="5" y1="5" x2="62" y2="54"><stop offset="0" stop-color="#5A9FD4"/><stop offset="1" stop-color="#306998"/></linearGradient><linearGradient id="py5" gradientUnits="userSpaceOnUse" x1="83" y1="88" x2="62" y2="58"><stop offset="0" stop-color="#FFD43B"/><stop offset="1" stop-color="#FFE873"/></linearGradient></defs><path d="M 54.918785,9.1927421e-4 C 50.335132,0.02221727 45.957846,0.41313697 42.106285,1.0946693 30.760069,3.0991731 28.700036,7.2947714 28.700035,15.032169 v 10.21875 h 26.8125 v 3.40625 h -26.8125 -10.0625 c -7.792459,0 -14.6157588,4.683717 -16.7499998,13.59375 -2.46181998,10.212966 -2.57101508,16.586023 0,27.25 1.9059283,7.937852 6.4575432,13.593748 14.2499998,13.59375 h 9.21875 v -12.25 c 0,-8.849902 7.657144,-16.656248 16.75,-16.65625 h 26.78125 c 7.454951,0 13.406253,-6.138164 13.40625,-13.625 v -25.53125 c 0,-7.2663386 -6.12998,-12.7247771 -13.40625,-13.9374997 C 64.281548,0.32794397 59.502438,-0.02037903 54.918785,9.1927421e-4 Z m -14.5,8.21875012579 c 2.769547,0 5.03125,2.2986456 5.03125,5.1249996 -2e-6,2.816336 -2.261703,5.09375 -5.03125,5.09375 -2.779476,-1e-6 -5.03125,-2.277415 -5.03125,-5.09375 -10e-7,-2.826353 2.251774,-5.1249996 5.03125,-5.1249996 z" fill="url(#pb5)"/><path d="m 85.637535,28.657169 v 11.90625 c 0,9.230755 -7.825895,16.999999 -16.75,17 h -26.78125 c -7.335833,0 -13.406249,6.278483 -13.40625,13.625 v 25.531247 c 0,7.266344 6.318588,11.540324 13.40625,13.625004 8.487331,2.49561 16.626237,2.94663 26.78125,0 6.750155,-1.95439 13.406253,-5.88761 13.40625,-13.625004 V 86.500919 h -26.78125 v -3.40625 h 26.78125 13.406254 c 7.792461,0 10.696251,-5.435408 13.406241,-13.59375 2.79933,-8.398886 2.68022,-16.475776 0,-27.25 -1.92578,-7.757441 -5.60387,-13.59375 -13.406241,-13.59375 z m -15.0625,64.65625 c 2.779478,3e-6 5.03125,2.277417 5.03125,5.093747 -2e-6,2.826354 -2.251775,5.125004 -5.03125,5.125004 -2.76955,0 -5.03125,-2.29865 -5.03125,-5.125004 2e-6,-2.81633 2.261697,-5.093747 5.03125,-5.093747 z" fill="url(#py5)"/></svg>
<svg class="i" style="left:976.65px;top:593.50px" width="61.8" height="62.5" viewBox="-0.1 -0.1 111.3 112.6" preserveAspectRatio="none"><defs><linearGradient id="pb6" gradientUnits="userSpaceOnUse" x1="5" y1="5" x2="62" y2="54"><stop offset="0" stop-color="#5A9FD4"/><stop offset="1" stop-color="#306998"/></linearGradient><linearGradient id="py6" gradientUnits="userSpaceOnUse" x1="83" y1="88" x2="62" y2="58"><stop offset="0" stop-color="#FFD43B"/><stop offset="1" stop-color="#FFE873"/></linearGradient></defs><path d="M 54.918785,9.1927421e-4 C 50.335132,0.02221727 45.957846,0.41313697 42.106285,1.0946693 30.760069,3.0991731 28.700036,7.2947714 28.700035,15.032169 v 10.21875 h 26.8125 v 3.40625 h -26.8125 -10.0625 c -7.792459,0 -14.6157588,4.683717 -16.7499998,13.59375 -2.46181998,10.212966 -2.57101508,16.586023 0,27.25 1.9059283,7.937852 6.4575432,13.593748 14.2499998,13.59375 h 9.21875 v -12.25 c 0,-8.849902 7.657144,-16.656248 16.75,-16.65625 h 26.78125 c 7.454951,0 13.406253,-6.138164 13.40625,-13.625 v -25.53125 c 0,-7.2663386 -6.12998,-12.7247771 -13.40625,-13.9374997 C 64.281548,0.32794397 59.502438,-0.02037903 54.918785,9.1927421e-4 Z m -14.5,8.21875012579 c 2.769547,0 5.03125,2.2986456 5.03125,5.1249996 -2e-6,2.816336 -2.261703,5.09375 -5.03125,5.09375 -2.779476,-1e-6 -5.03125,-2.277415 -5.03125,-5.09375 -10e-7,-2.826353 2.251774,-5.1249996 5.03125,-5.1249996 z" fill="url(#pb6)"/><path d="m 85.637535,28.657169 v 11.90625 c 0,9.230755 -7.825895,16.999999 -16.75,17 h -26.78125 c -7.335833,0 -13.406249,6.278483 -13.40625,13.625 v 25.531247 c 0,7.266344 6.318588,11.540324 13.40625,13.625004 8.487331,2.49561 16.626237,2.94663 26.78125,0 6.750155,-1.95439 13.406253,-5.88761 13.40625,-13.625004 V 86.500919 h -26.78125 v -3.40625 h 26.78125 13.406254 c 7.792461,0 10.696251,-5.435408 13.406241,-13.59375 2.79933,-8.398886 2.68022,-16.475776 0,-27.25 -1.92578,-7.757441 -5.60387,-13.59375 -13.406241,-13.59375 z m -15.0625,64.65625 c 2.779478,3e-6 5.03125,2.277417 5.03125,5.093747 -2e-6,2.826354 -2.251775,5.125004 -5.03125,5.125004 -2.76955,0 -5.03125,-2.29865 -5.03125,-5.125004 2e-6,-2.81633 2.261697,-5.093747 5.03125,-5.093747 z" fill="url(#py6)"/></svg>
<svg class="i" style="left:647.05px;top:842.85px" width="71.8" height="71.8" viewBox="0 0 24 24" ><rect x="2" y="2" width="20" height="20" fill="#424242"/><text transform="translate(4.667 17.527) scale(0.11333 0.13902)" font-family="Liberation Sans, sans-serif" font-size="100" font-weight="bold" fill="#f2f2f2">$</text><text transform="translate(12.293 14.500) scale(0.09259 0.31750)" font-family="Liberation Sans, sans-serif" font-size="100" font-weight="bold" fill="#f2f2f2">_</text></svg>
<svg class="i" style="left:809.60px;top:842.95px" width="71.5" height="71.5" viewBox="0 0 24 24" ><path d="M15 15H3v2h12v-2zm0-8H3v2h12V7zM3 13h18v-2H3v2zm0 8h18v-2H3v2zM3 3v2h18V3H3z" fill="#616161"/></svg>
<svg class="i" style="left:971.70px;top:842.80px" width="71.5" height="71.5" viewBox="0 0 22 22" ><path fill="#8E24AA" d="M5 14.9h12l-6.1 6zm9.4-6.8c0-1.3-.1-2.9-.1-4.5-.4 1.4-.9 2.9-1.3 4.3l-1.3 4.3h-2L8.5 7.9c-.4-1.3-.7-2.9-1-4.3-.1 1.6-.1 3.2-.2 4.6L7 12.4H4.8l.7-11h3.3L10 5c.4 1.2.7 2.7 1 3.9.3-1.2.7-2.7 1-3.9l1.2-3.7h3.3l.6 11h-2.4l-.3-4.2z"/></svg>
<svg class="i" style="left:1134.00px;top:842.60px" width="71.5" height="71.5" viewBox="0 0 22 22" ><g fill="#0D47A1"><path d="M11.1 6.9V5.8H6.9c0-.5 0-1.3.2-1.6.4-.7.8-1.1 1.7-1.4 1.7-.3 2.5-.3 3.9-.1 1 .1 1.9.9 1.9 1.9v4.2c0 .5-.9 1.6-2 1.6H8.8c-1.5 0-2.4 1.4-2.4 2.8v2.2H4.7C3.5 15.1 3 14 3 13.1V9c-.1-1 .6-2 1.8-2 1.5-.1 6.3-.1 6.3-.1z"/><path d="M10.9 15.1v1.1h4.2c0 .5 0 1.3-.2 1.6-.4.7-.8 1.1-1.7 1.4-1.7.3-2.5.3-3.9.1-1-.1-1.9-.9-1.9-1.9v-4.2c0-.5.9-1.6 2-1.6h3.8c1.5 0 2.4-1.4 2.4-2.8V6.6h1.7C18.5 6.9 19 8 19 8.9V13c0 1-.7 2.1-1.9 2.1h-6.2z"/></g></svg>
<svg class="i" style="left:1296.10px;top:842.70px" width="71.5" height="71.5" viewBox="0 0 24 24" ><path fill="#616161" d="M20 4H4c-1.1 0-1.99.9-1.99 2L2 18c0 1.1.9 2 2 2h16c1.1 0 2-.9 2-2V6c0-1.1-.9-2-2-2zm-5 14H4v-4h11v4zm0-5H4V9h11v4zm5 5h-4V9h4v9z"/></svg>
<span class="t" style="left:477.03px;top:109.00px;font-size:17.7px;color:#212121;transform:scaleX(0.9717);">Launcher</span>
<span class="t" style="left:602.20px;top:190.00px;font-size:22.7px;color:#212121;transform:scaleX(0.9037);">venv</span>
<span class="t" style="left:669.87px;top:258.00px;font-size:21.6px;color:#212121;transform:scaleX(1.0301);">Notebook</span>
<span class="t" style="left:669.03px;top:512.00px;font-size:21.6px;color:#212121;transform:scaleX(0.9678);">Console</span>
<span class="t" style="left:668.98px;top:767.00px;font-size:21.6px;color:#212121;transform:scaleX(1.0224);">Other</span>
<span class="t" style="left:650.38px;top:419.00px;font-size:17.7px;color:#212121;transform:scaleX(0.9191);">Python 3</span>
<span class="t" style="left:644.26px;top:438.00px;font-size:17.7px;color:#212121;transform:scaleX(0.9371);">(ipykernel)</span>
<span class="t" style="left:831.10px;top:419.00px;font-size:17.7px;color:#212121;transform:scaleX(0.9335);">geo</span>
<span class="t" style="left:993.80px;top:419.00px;font-size:17.7px;color:#212121;transform:scaleX(0.9442);">test</span>
<span class="t" style="left:650.38px;top:673.00px;font-size:17.7px;color:#212121;transform:scaleX(0.9191);">Python 3</span>
<span class="t" style="left:644.26px;top:692.00px;font-size:17.7px;color:#212121;transform:scaleX(0.9371);">(ipykernel)</span>
<span class="t" style="left:831.10px;top:673.00px;font-size:17.7px;color:#212121;transform:scaleX(0.9335);">geo</span>
<span class="t" style="left:993.80px;top:673.00px;font-size:17.7px;color:#212121;transform:scaleX(0.9442);">test</span>
<span class="t" style="left:652.90px;top:927.00px;font-size:17.7px;color:#212121;transform:scaleX(0.9225);">Terminal</span>
<span class="t" style="left:816.40px;top:927.00px;font-size:17.7px;color:#212121;transform:scaleX(0.8771);">Text File</span>
<span class="t" style="left:953.06px;top:927.00px;font-size:17.7px;color:#212121;transform:scaleX(0.9364);">Markdown File</span>
<span class="t" style="left:1129.09px;top:927.00px;font-size:17.7px;color:#212121;transform:scaleX(0.9094);">Python File</span>
<span class="t" style="left:1270.60px;top:927.00px;font-size:17.7px;color:#212121;transform:scaleX(0.9172);">Show Contextual</span>
<span class="t" style="left:1314.68px;top:947.00px;font-size:17.7px;color:#212121;transform:scaleX(0.9173);">Help</span>
</main>
</body></html>
